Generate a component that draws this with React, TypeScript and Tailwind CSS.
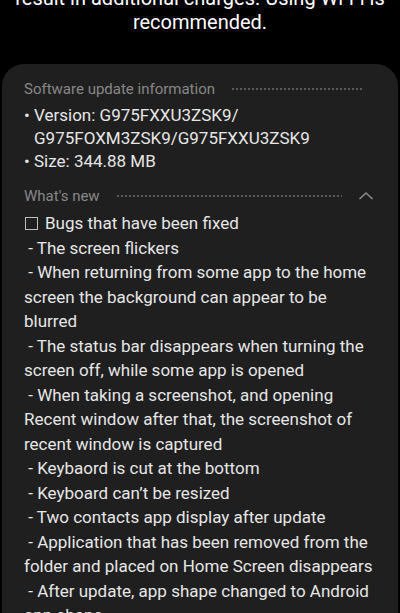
import React from "react";

const Dots = () => (
  <div className="flex-1 h-[2px] mx-[16px] bg-[radial-gradient(circle,#5a5a5a_0.8px,transparent_1px)] bg-[length:4px_2px] bg-repeat-x" />
);

const lines: string[] = [
  " - The screen flickers",
  " - When returning from some app to the home",
  "screen the background can appear to be",
  "blurred",
  " - The status bar disappears when turning the",
  "screen off, while some app is opened",
  " - When taking a screenshot, and opening",
  "Recent window after that, the screenshot of",
  "recent window is captured",
  " - Keybaord is cut at the bottom",
  " - Keyboard can\u2019t be resized",
  " - Two contacts app display after update",
  " - Application that has been removed from the",
  "folder and placed on Home Screen disappears",
  " - After update, app shape changed to Android",
  "app shape",
];

export default function App() {
  return (
    <div className="w-[400px] h-[613px] overflow-hidden bg-black font-['Roboto',sans-serif]">
      <div className="mt-[-14px] text-center text-white text-[20px] leading-[24px]">
        <div>result in additional charges. Using Wi-Fi is</div>
        <div>recommended.</div>
      </div>
      <div className="mt-[30px] mx-[2px] rounded-t-[22px] bg-[#1f1f1f] pl-[22px] pr-[20px] pt-[14px] h-[600px]">
        <div className="flex items-center h-[22px]">
          <span className="text-[15px] text-[#878787]">Software update information</span>
          <Dots />
        </div>
        <div className="mt-[4px] text-[17px] leading-[23px] text-[#e6e6e6]">
          <div className="flex">
            <span className="w-[10px] shrink-0">•</span>
            <span>Version: G975FXXU3ZSK9/<br />G975FOXM3ZSK9/G975FXXU3ZSK9</span>
          </div>
          <div className="flex">
            <span className="w-[10px] shrink-0">•</span>
            <span>Size: 344.88 MB</span>
          </div>
        </div>
        <div className="flex items-center h-[22px] mt-[12px]">
          <span className="text-[15px] text-[#878787]">What's new</span>
          <Dots />
          <svg width="16" height="10" viewBox="0 0 16 10" className="mr-[4px]">
            <path d="M1.5 8 L8 2 L14.5 8" fill="none" stroke="#8a8a8a" strokeWidth="1.6" />
          </svg>
        </div>
        <div className="mt-[4px] text-[17px] leading-[24.5px] text-[#e6e6e6]">
          <div className="flex items-center">
            <span className="inline-block w-[13px] h-[13px] border border-[#bdbdbd] ml-[1px] mr-[7px]" />
            <span>Bugs that have been fixed</span>
          </div>
          {lines.map((l, i) => (
            <div key={i} className="whitespace-pre">{l}</div>
          ))}
        </div>
      </div>
    </div>
  );
}
